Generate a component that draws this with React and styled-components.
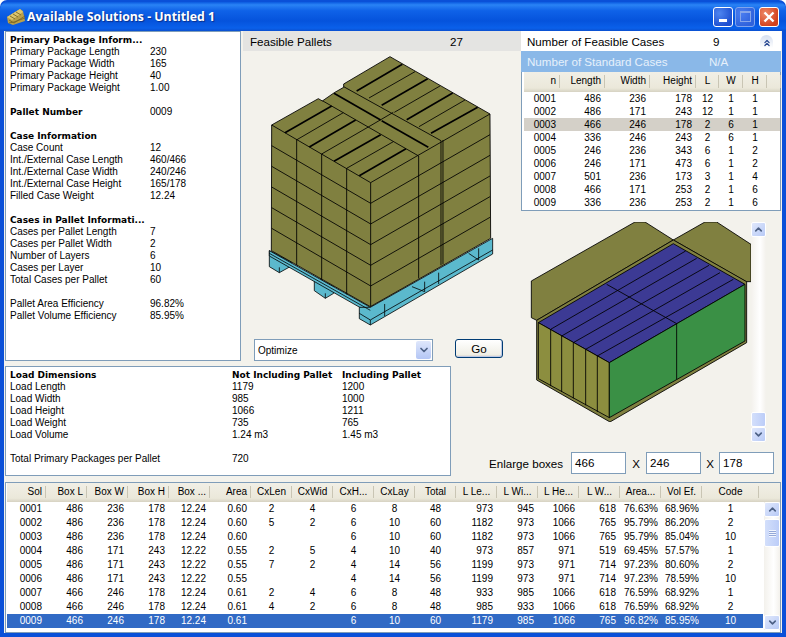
import React from "react";
import styled, { createGlobalStyle } from "styled-components";
import { ChevronUp, ChevronDown, ChevronsUp } from "lucide-react";

const uiFont = `"Liberation Sans", Arial, sans-serif`;
const boldFont = `"DejaVu Sans", "Liberation Sans", sans-serif`;

const GlobalStyle = createGlobalStyle`
  html, body {
    margin: 0;
    padding: 0;
    background: #fff;
    overflow: hidden;
  }
  * {
    box-sizing: border-box;
  }
`;

const infoRows = [
  ["Primary Package Inform...", "", true],
  ["Primary Package Length", "230"],
  ["Primary Package Width", "165"],
  ["Primary Package Height", "40"],
  ["Primary Package Weight", "1.00"],
  ["", ""],
  ["Pallet Number", "0009", true],
  ["", ""],
  ["Case Information", "", true],
  ["Case Count", "12"],
  ["Int./External Case Length", "460/466"],
  ["Int./External Case Width", "240/246"],
  ["Int./External Case Height", "165/178"],
  ["Filled Case Weight", "12.24"],
  ["", ""],
  ["Cases in Pallet Informati...", "", true],
  ["Cases per Pallet Length", "7"],
  ["Cases per Pallet Width", "2"],
  ["Number of Layers", "6"],
  ["Cases per Layer", "10"],
  ["Total Cases per Pallet", "60"],
  ["", ""],
  ["Pallet Area Efficiency", "96.82%"],
  ["Pallet Volume Efficiency", "85.95%"],
];

const loadRows = [
  ["Load Dimensions", "Not Including Pallet", "Including Pallet", true],
  ["Load Length", "1179", "1200"],
  ["Load Width", "985", "1000"],
  ["Load Height", "1066", "1211"],
  ["Load Weight", "735", "765"],
  ["Load Volume", "1.24 m3", "1.45 m3"],
  ["", "", ""],
  ["Total Primary Packages per Pallet", "720", ""],
];

const caseCols = [
  { name: "n", w: 36, align: "right" },
  { name: "Length", w: 45, align: "right" },
  { name: "Width", w: 45, align: "right" },
  { name: "Height", w: 46, align: "right" },
  { name: "L", w: 23, align: "center" },
  { name: "W", w: 24, align: "center" },
  { name: "H", w: 24, align: "center" },
  { name: "", w: 14, align: "center" },
];

const caseRows = [
  ["0001", "486", "236", "178", "12", "1", "1"],
  ["0002", "486", "171", "243", "12", "1", "1"],
  ["0003", "466", "246", "178", "2", "6", "1"],
  ["0004", "336", "246", "243", "2", "6", "1"],
  ["0005", "246", "236", "343", "6", "1", "2"],
  ["0006", "246", "171", "473", "6", "1", "2"],
  ["0007", "501", "236", "173", "3", "1", "4"],
  ["0008", "466", "171", "253", "2", "1", "6"],
  ["0009", "336", "236", "253", "2", "1", "6"],
];

const solCols = [
  { name: "Sol", w: 39, align: "right" },
  { name: "Box L", w: 41, align: "right" },
  { name: "Box W", w: 41, align: "right" },
  { name: "Box H", w: 41, align: "right" },
  { name: "Box ...", w: 41, align: "right" },
  { name: "Area", w: 41, align: "right" },
  { name: "CxLen", w: 41, align: "center" },
  { name: "CxWid", w: 41, align: "center" },
  { name: "CxH...", w: 41, align: "center" },
  { name: "CxLay", w: 41, align: "center" },
  { name: "Total", w: 41, align: "center" },
  { name: "L Le...", w: 41, align: "right", head: "center" },
  { name: "L Wi...", w: 41, align: "right", head: "center" },
  { name: "L He...", w: 41, align: "right", head: "center" },
  { name: "L W...", w: 41, align: "right", head: "center" },
  { name: "Area...", w: 41, align: "right", head: "center" },
  { name: "Vol Ef.", w: 41, align: "right", head: "center" },
  { name: "Code", w: 57, align: "center" },
];

const solRows = [
  ["0001", "486", "236", "178", "12.24", "0.60", "2", "4", "6", "8", "48", "973", "945", "1066", "618", "76.63%", "68.96%", "1"],
  ["0002", "486", "236", "178", "12.24", "0.60", "5", "2", "6", "10", "60", "1182", "973", "1066", "765", "95.79%", "86.20%", "2"],
  ["0003", "486", "236", "178", "12.24", "0.60", "", "", "6", "10", "60", "1182", "973", "1066", "765", "95.79%", "85.04%", "10"],
  ["0004", "486", "171", "243", "12.22", "0.55", "2", "5", "4", "10", "40", "973", "857", "971", "519", "69.45%", "57.57%", "1"],
  ["0005", "486", "171", "243", "12.22", "0.55", "7", "2", "4", "14", "56", "1199", "973", "971", "714", "97.23%", "80.60%", "2"],
  ["0006", "486", "171", "243", "12.22", "0.55", "", "", "4", "14", "56", "1199", "973", "971", "714", "97.23%", "78.59%", "10"],
  ["0007", "466", "246", "178", "12.24", "0.61", "2", "4", "6", "8", "48", "933", "985", "1066", "618", "76.59%", "68.92%", "1"],
  ["0008", "466", "246", "178", "12.24", "0.61", "4", "2", "6", "8", "48", "985", "933", "1066", "618", "76.59%", "68.92%", "2"],
  ["0009", "466", "246", "178", "12.24", "0.61", "", "", "6", "10", "60", "1179", "985", "1066", "765", "96.82%", "85.95%", "10"],
];

const AppLogo = () => (
  <LogoSvg viewBox="0 0 18 16">
    <polygon points="0,8 13,0 16,2 18,12 6,16 1,14" fill="#b9a04a" />
    <polygon points="0,8 5,11 16,3 13,0" fill="#dcc56e" />
    <path d="M3 7l5 3M6 5l5 3M9 3l5 3M2 11l5 3 11-7M2 14l5-1 11-4" stroke="#7a6826" strokeWidth="0.9" fill="none" />
  </LogoSvg>
);

// drawn in 3x coordinates so the numbers line up with a zoomed crop
const palletLeftLayers = [0, 1, 2, 3, 4, 5].map((i) => 225 + i * 62);
const palletFrontLayers = [0, 1, 2, 3, 4, 5].map((i) => 398 + i * 62);
const palletRightLayers = [0, 1, 2, 3, 4, 5].map((i) => 192 + i * 62);

const thickTop = [
  [60, 248, 200, 168],
  [133, 291, 272, 210],
  [207, 334, 347, 254],
  [283, 377, 423, 296],
  [275, 123, 412, 43],
  [350, 166, 488, 86],
  [425, 209, 563, 129],
  [498, 250, 638, 172],
  [207, 130, 347, 210],
  [350, 212, 490, 292],
];

const thinTop = [
  [96, 269, 235, 188],
  [170, 312, 310, 231],
  [245, 355, 385, 275],
  [312, 144, 450, 65],
  [388, 187, 525, 108],
  [462, 230, 600, 150],
  [172, 152, 461, 318],
  [236, 110, 528, 272],
  [310, 231, 385, 187],
];

const PalletDrawing = () => (
  <PalletSvg viewBox="261 52 240 280" width="240" height="280">
    <g transform="translate(262 230) scale(0.3333)" stroke="#000" strokeWidth="2.4" fill="#5bb9cd" strokeLinejoin="round">
      <polygon points="22,62 22,110 52,128 88,108 88,95" />
      <polygon points="157,140 157,182 190,205 215,190 215,170" />
      <polygon points="22,62 325,232 325,250 22,78" />
      <polygon points="325,232 692,25 692,72 325,285 292,266 292,232" />
      <path d="M22 70L325 241M292 250L325 270L368 245L692 60M325 270V285M368 222V258M488 155V185M530 128V162M650 55V90M620 70L650 90M450 170L488 185M190 190V205M52 112V128" fill="none" />
    </g>
    <g transform="translate(265 50) scale(0.3333)" stroke="#000" strokeWidth="2.6" strokeLinejoin="round">
      <polygon
        points="20,225 160,146 172,153 208,128 236,112 236,102 375,20 675,192 677,565 316,770 19,602"
        fill="#808040"
      />
      {palletLeftLayers.slice(1).map((y) => (
        <line key={y} x1="20" y1={y} x2="317" y2={y + 173} />
      ))}
      {palletFrontLayers.map((y, i) => (
        <line key={y} x1="317" y1={y} x2="675" y2={palletRightLayers[i]} />
      ))}
      <line x1="20" y1="225" x2="317" y2="398" />
      <path d="M95 268V646M170 312V690M245 355V733M317 398V770M461 318V685M528 272V646M534 270V643" fill="none" />
      {thinTop.map((l) => (
        <line key={l.join()} x1={l[0]} y1={l[1]} x2={l[2]} y2={l[3]} />
      ))}
      {thickTop.map((l) => (
        <line key={l.join()} x1={l[0]} y1={l[1]} x2={l[2]} y2={l[3]} strokeWidth="5" />
      ))}
    </g>
  </PalletSvg>
);

const blueLines = [
  [92, 340, 497, 105],
  [125, 360, 530, 127],
  [160, 380, 567, 148],
  [197, 400, 600, 170],
  [232, 420, 640, 190],
  [260, 205, 470, 323],
];

const CaseDrawing = () => (
  <CaseSvg viewBox="521 221 230 200" width="230" height="200">
    <g transform="translate(520 215) scale(0.3333)" stroke="#000" strokeWidth="2.6" strokeLinejoin="round">
      <polygon points="34,195 345,18 375,18 460,72 50,313 34,305" fill="#808040" />
      <polygon points="460,72 555,18 590,18 693,85 693,197 678,197" fill="#808040" />
      <polygon points="50,313 460,72 680,197 680,380 270,618 50,492" fill="#808040" />
      <polygon points="55,320 460,83 675,205 268,440" fill="#3c3a94" />
      <polygon points="55,320 268,440 268,605 55,488" fill="#8c8e3f" />
      <polygon points="268,440 675,205 675,375 268,605" fill="#3a9045" />
      {blueLines.map((l) => (
        <line key={l.join()} x1={l[0]} y1={l[1]} x2={l[2]} y2={l[3]} />
      ))}
      <path d="M92 340V510M125 360V528M160 380V547M197 400V568M232 420V588M470 323V490" fill="none" />
    </g>
  </CaseSvg>
);

const GridHead = ({ cols, height }) => (
  <HeadRow $height={height}>
    {cols.map((c, i) => (
      <HeadCell key={i} $w={c.w} $align={c.head || c.align}>
        {c.name}
      </HeadCell>
    ))}
  </HeadRow>
);

const GridRow = ({ cols, row, height, selected, pale }) => (
  <DataRow $height={height} $selected={selected} $pale={pale}>
    {row.map((v, i) => (
      <DataCell key={i} $w={cols[i].w} $align={cols[i].align}>
        {v}
      </DataCell>
    ))}
  </DataRow>
);

const App = () => {
  return (
    <>
      <GlobalStyle />
      <Window>
        <TitleBar>
          <AppLogo />
          <Title>Available Solutions - Untitled 1</Title>
          <Controls>
            <MinButton>
              <span />
            </MinButton>
            <MaxButton>
              <span />
            </MaxButton>
            <CloseButton>
              <svg width="12" height="12" viewBox="0 0 12 12">
                <path d="M1.5 1.5L10.5 10.5M10.5 1.5L1.5 10.5" stroke="#fff" strokeWidth="2.4" />
              </svg>
            </CloseButton>
          </Controls>
        </TitleBar>
        <Client>
          <Upper>
            <LeftStack>
              <TopRow>
                <InfoPanel>
                  {infoRows.map(([label, value, bold], i) => (
                    <InfoRow key={i}>
                      <InfoLabel $bold={bold}>{label}</InfoLabel>
                      <span>{value}</span>
                    </InfoRow>
                  ))}
                </InfoPanel>
                <PalletColumn>
                  <PalletHeader>
                    <PalletLabel>Feasible Pallets</PalletLabel>
                    <span>27</span>
                  </PalletHeader>
                  <PalletDrawing />
                  <ComboRow>
                    <Combo>
                      <span>Optimize</span>
                      <ComboArrow>
                        <ChevronDown size={12} strokeWidth={3.5} />
                      </ComboArrow>
                    </Combo>
                    <GoButton>Go</GoButton>
                  </ComboRow>
                </PalletColumn>
              </TopRow>
              <LoadPanel>
                {loadRows.map(([label, a, b, bold], i) => (
                  <LoadRow key={i} $bold={bold}>
                    <span>{label}</span>
                    <span>{a}</span>
                    <span>{b}</span>
                  </LoadRow>
                ))}
              </LoadPanel>
            </LeftStack>
            <RightStack>
              <CaseHeader>
                <CaseHeaderLabel>Number of Feasible Cases</CaseHeaderLabel>
                <span>9</span>
                <CollapseIcon>
                  <ChevronsUp size={10} strokeWidth={3} />
                </CollapseIcon>
              </CaseHeader>
              <StandardHeader>
                <StandardLabel>Number of Standard Cases</StandardLabel>
                <span>N/A</span>
              </StandardHeader>
              <CaseTable>
                <GridHead cols={caseCols} height={20} />
                {caseRows.map((row, i) => (
                  <GridRow key={i} cols={caseCols} row={row} height={13} pale={i === 2} />
                ))}
              </CaseTable>
              <PreviewRow>
                <CaseDrawing />
                <Scrollbar>
                  <ScrollButton>
                    <ChevronUp size={11} strokeWidth={3.5} />
                  </ScrollButton>
                  <ScrollTrack $justify="flex-end">
                    <ScrollThumb $height={15} />
                  </ScrollTrack>
                  <ScrollButton>
                    <ChevronDown size={11} strokeWidth={3.5} />
                  </ScrollButton>
                </Scrollbar>
              </PreviewRow>
              <EnlargeRow>
                <EnlargeLabel>Enlarge boxes</EnlargeLabel>
                <SizeInput>466</SizeInput>
                <Times $w={20}>X</Times>
                <SizeInput>246</SizeInput>
                <Times $w={18}>X</Times>
                <SizeInput>178</SizeInput>
              </EnlargeRow>
            </RightStack>
          </Upper>
          <SolutionList>
            <GridHead cols={solCols} height={19} />
            <ListBody>
              <SolutionRows>
                {solRows.map((row, i) => (
                  <GridRow key={i} cols={solCols} row={row} height={14} selected={i === 8} />
                ))}
              </SolutionRows>
              <ListScroll>
                <ScrollButton>
                  <ChevronUp size={11} strokeWidth={3.5} />
                </ScrollButton>
                <ScrollTrack $justify="flex-start">
                  <ScrollThumb $height={28}>
                    <Grip />
                  </ScrollThumb>
                </ScrollTrack>
                <ScrollButton>
                  <ChevronDown size={11} strokeWidth={3.5} />
                </ScrollButton>
              </ListScroll>
            </ListBody>
          </SolutionList>
        </Client>
      </Window>
    </>
  );
};

const Window = styled.div`
  width: 786px;
  height: 637px;
  display: flex;
  flex-direction: column;
  padding-top: 2px;
  background: #0a50d8;
  border-radius: 7px 7px 0 0;
  font-family: ${uiFont};
  font-size: 10px;
  color: #000;
  overflow: hidden;
`;

const TitleBar = styled.div`
  height: 29px;
  display: flex;
  align-items: center;
  padding: 0 7px 0 7px;
  background: linear-gradient(
    180deg,
    #0a5ae0 0%,
    #2a83f5 10%,
    #0f62e8 30%,
    #0553dc 65%,
    #0a60ea 90%,
    #0a50d0 100%
  );
  border-radius: 7px 7px 0 0;
`;

const LogoSvg = styled.svg`
  width: 18px;
  height: 16px;
  flex: none;
`;

const Title = styled.div`
  margin-left: 2px;
  flex: 1;
  color: #fff;
  font-family: "Open Sans", "Noto Sans", sans-serif;
  font-weight: 700;
  font-size: 12.3px;
  text-shadow: 1px 1px 1px #0a2f8a;
  white-space: nowrap;
`;

const Controls = styled.div`
  display: flex;
  gap: 2px;
`;

const CtlButton = styled.div`
  width: 20px;
  height: 20px;
  border: 1px solid #fff;
  border-radius: 3px;
  display: flex;
  justify-content: center;
`;

const MinButton = styled(CtlButton)`
  background: radial-gradient(circle at 30% 30%, #4f86f0, #1e4fd0 75%);
  align-items: flex-end;
  padding-bottom: 4px;
  span {
    width: 8px;
    height: 3px;
    background: #fff;
  }
`;

const MaxButton = styled(CtlButton)`
  background: radial-gradient(circle at 30% 30%, #4a7df0, #2f62dc 75%);
  border-color: #7fa4ee;
  align-items: center;
  span {
    width: 11px;
    height: 11px;
    border: 1px solid #86a6ea;
    border-top-width: 2px;
  }
`;

const CloseButton = styled(CtlButton)`
  margin-left: 2px;
  background: radial-gradient(circle at 30% 30%, #ee8a68, #d3401c 75%);
  align-items: center;
`;

const Client = styled.div`
  flex: 1;
  margin: 0 4px 4px;
  padding: 0 1px;
  background: #f3f2ec;
  display: flex;
  flex-direction: column;
`;

const Upper = styled.div`
  display: flex;
  height: 451px;
`;

const LeftStack = styled.div`
  width: 516px;
  display: flex;
  flex-direction: column;
`;

const TopRow = styled.div`
  display: flex;
  height: 330px;
`;

const InfoPanel = styled.div`
  width: 236px;
  background: #fff;
  border: 1px solid #7f9db9;
  padding: 2px 4px;
`;

const InfoRow = styled.div`
  height: 12px;
  line-height: 12px;
  display: grid;
  grid-template-columns: 140px 1fr;
  white-space: nowrap;
`;

const InfoLabel = styled.span`
  ${(p) => p.$bold && `font-family: ${boldFont}; font-weight: 700; font-size: 9px;`}
`;

const PalletColumn = styled.div`
  width: 280px;
  display: flex;
  flex-direction: column;
`;

const PalletHeader = styled.div`
  margin-left: 2px;
  height: 20px;
  background: #e4e4e2;
  display: flex;
  align-items: center;
  padding-left: 7px;
  font-size: 11.6px;
`;

const PalletLabel = styled.span`
  width: 200px;
`;

const PalletSvg = styled.svg`
  display: block;
  margin: 1px 0 0 20px;
  flex: none;
`;

const ComboRow = styled.div`
  display: flex;
  margin: 7px 0 0 13px;
`;

const Combo = styled.div`
  width: 179px;
  height: 22px;
  background: #fff;
  border: 1px solid #7f9db9;
  display: flex;
  align-items: center;
  justify-content: space-between;
  padding: 0 1px 0 3px;
`;

const ComboArrow = styled.div`
  width: 15px;
  height: 18px;
  border-radius: 2px;
  background: linear-gradient(180deg, #dfe7fb, #b4c6f5);
  color: #4d6185;
  display: flex;
  align-items: center;
  justify-content: center;
`;

const GoButton = styled.div`
  margin-left: 22px;
  width: 48px;
  height: 19px;
  border: 1px solid #003c74;
  border-radius: 3px;
  background: linear-gradient(180deg, #fff, #f0efe6 85%, #d6d0c5);
  box-shadow: inset -1px -1px 0 #bcc9e6;
  display: flex;
  align-items: center;
  justify-content: center;
  font-size: 11.6px;
`;

const LoadPanel = styled.div`
  margin-top: 5px;
  width: 446px;
  height: 110px;
  background: #fff;
  border: 1px solid #7f9db9;
  padding: 2px 4px;
`;

const LoadRow = styled.div`
  height: 12px;
  line-height: 12px;
  display: grid;
  grid-template-columns: 222px 110px 1fr;
  white-space: nowrap;
  ${(p) => p.$bold && `font-family: ${boldFont}; font-weight: 700; font-size: 9px;`}
`;

const RightStack = styled.div`
  width: 260px;
  display: flex;
  flex-direction: column;
`;

const CaseHeader = styled.div`
  height: 20px;
  background: #fff;
  display: flex;
  align-items: center;
  padding-left: 6px;
  font-size: 11.6px;
`;

const CaseHeaderLabel = styled.span`
  width: 186px;
  white-space: nowrap;
`;

const CollapseIcon = styled.div`
  width: 13px;
  height: 13px;
  margin-left: 41px;
  border-radius: 8px 8px 0 0;
  background: linear-gradient(180deg, #d6dff0, #fff);
  color: #25458f;
  display: flex;
  align-items: flex-end;
  justify-content: center;
`;

const StandardHeader = styled.div`
  height: 21px;
  background: #8ab8e8;
  color: #e6f0fb;
  display: flex;
  align-items: center;
  padding-left: 6px;
  font-size: 11.6px;
`;

const StandardLabel = styled(CaseHeaderLabel)`
  width: 182px;
`;

const CaseTable = styled.div`
  height: 139px;
  background: #fff;
  border: 1px solid #7f9db9;
  border-top: 0;
  padding-left: 2px;
`;

const HeadRow = styled.div`
  display: flex;
  height: ${(p) => p.$height}px;
  background: linear-gradient(180deg, #f1efe6, #ebe8da 80%, #d6d2c2);
`;

const HeadCell = styled.div`
  width: ${(p) => p.$w}px;
  flex: none;
  padding: 0 4px;
  text-align: ${(p) => p.$align};
  white-space: nowrap;
  position: relative;
  line-height: 18px;
  &::after {
    content: "";
    position: absolute;
    right: 0;
    top: 3px;
    bottom: 4px;
    width: 1px;
    background: #c9c5b4;
  }
`;

const DataRow = styled.div`
  display: flex;
  height: ${(p) => p.$height}px;
  line-height: ${(p) => p.$height}px;
  background: ${(p) => (p.$selected ? "#316ac5" : p.$pale ? "#d4d0c8" : "transparent")};
  color: ${(p) => (p.$selected ? "#fff" : "#000")};
`;

const DataCell = styled.div`
  width: ${(p) => p.$w}px;
  flex: none;
  padding: 0 4px;
  text-align: ${(p) => p.$align};
  white-space: nowrap;
`;

const PreviewRow = styled.div`
  display: flex;
  margin-top: 11px;
  height: 220px;
`;

const CaseSvg = styled.svg`
  display: block;
  flex: none;
`;

const Scrollbar = styled.div`
  width: 15px;
  height: 220px;
  display: flex;
  flex-direction: column;
  background: linear-gradient(90deg, #f3f1ec, #fff 60%, #f3f1ec);
`;

const ScrollButton = styled.div`
  height: 15px;
  flex: none;
  border: 1px solid #fff;
  border-radius: 2px;
  background: linear-gradient(135deg, #e0e8fc, #b8caf6);
  color: #4d6185;
  display: flex;
  align-items: center;
  justify-content: center;
`;

const ScrollTrack = styled.div`
  flex: 1;
  display: flex;
  flex-direction: column;
  justify-content: ${(p) => p.$justify};
  padding: 2px 0 0;
`;

const ScrollThumb = styled.div`
  height: ${(p) => p.$height}px;
  border: 1px solid #fff;
  border-radius: 2px;
  background: linear-gradient(90deg, #d3dffb, #bccdf8);
  display: flex;
  align-items: center;
  justify-content: center;
`;

const Grip = styled.div`
  width: 7px;
  height: 7px;
  background: repeating-linear-gradient(180deg, #f1f5fe 0 1px, #94a8d8 1px 2px);
`;

const EnlargeRow = styled.div`
  display: flex;
  align-items: center;
  height: 22px;
  margin: 10px 0 0 -32px;
  font-size: 11.6px;
`;

const EnlargeLabel = styled.span`
  width: 82px;
  flex: none;
  white-space: nowrap;
`;

const SizeInput = styled.div`
  width: 55px;
  height: 22px;
  background: #fff;
  border: 1px solid #7f9db9;
  padding-left: 3px;
  line-height: 20px;
`;

const Times = styled.span`
  width: ${(p) => p.$w}px;
  text-align: center;
  flex: none;
`;

const SolutionList = styled.div`
  height: 151px;
  background: #fff;
  border: 1px solid #7f9db9;
  padding-left: 1px;
`;

const ListBody = styled.div`
  display: flex;
`;

const SolutionRows = styled.div`
  width: 756px;
  flex: none;
`;

const ListScroll = styled.div`
  width: 16px;
  height: 128px;
  margin-left: 1px;
  display: flex;
  flex-direction: column;
  background: linear-gradient(90deg, #f3f1ec, #fff 60%, #f3f1ec);
`;

export default App;
